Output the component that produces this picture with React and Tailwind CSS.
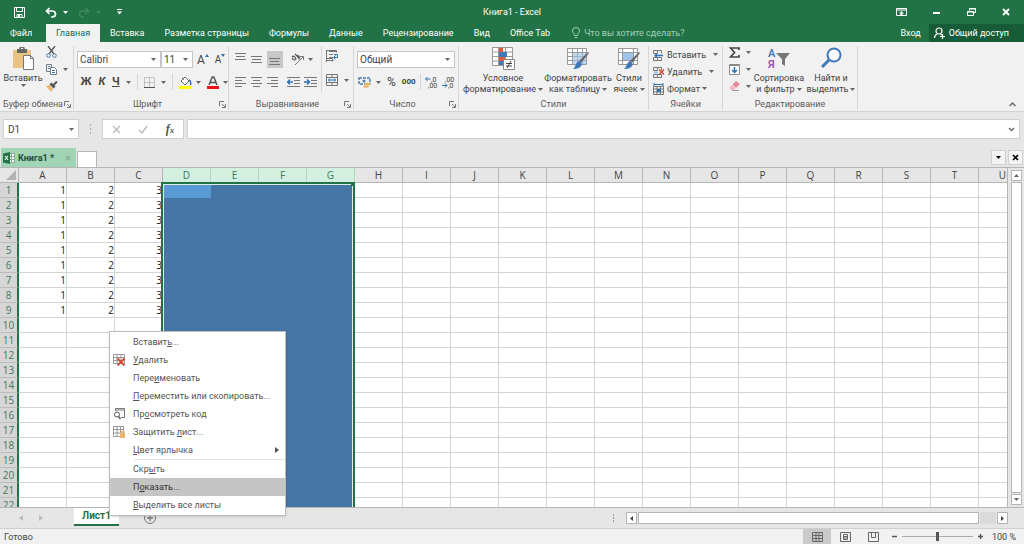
import React from "react";

const COLUMNS = "ABCDEFGHIJKLMNOPQRSTU".split("");
const ROWS = Array.from({ length: 22 }, (_, i) => i + 1);
const SELECTED = ["D", "E", "F", "G"];
const VALUES = { A: 1, B: 2, C: 3 };

const TABS = ["Вставка", "Разметка страницы", "Формулы", "Данные", "Рецензирование", "Вид", "Office Tab"];

function Svg({ w = 16, h = 16, children, className = "" }) {
  return (
    <svg width={w} height={h} viewBox={`0 0 ${w} ${h}`} fill="none" aria-hidden="true" className={`shrink-0 ${className}`}>
      {children}
    </svg>
  );
}

function Caret({ className = "text-[#666]" }) {
  return (
    <Svg w={5} h={3} className={className}>
      <path d="M0 0h5L2.500 3z" fill="currentColor" />
    </Svg>
  );
}

function IconButton({ label, children, className = "" }) {
  return (
    <button type="button" aria-label={label} title={label} className={`flex items-center justify-center ${className}`}>
      {children}
    </button>
  );
}

function Launcher() {
  return (
    <Svg w={7} h={7}>
      <path d="M.5 5V.5H5M3 3l3 3M6.500 3v3.500H3" stroke="#777" />
    </Svg>
  );
}

function Group({ title, launcher, className = "", children }) {
  return (
    <section aria-label={title} className="flex shrink-0 pt-1 pb-px">
      <div className={`flex flex-col border-r border-[#d6d6d6] ${className}`}>
        <div className="flex-1">{children}</div>
        <div className="flex h-3 items-center px-0.5 text-[#5c5c5c]">
          <span className="flex-1 text-center whitespace-nowrap">{title}</span>
          {launcher && (
            <IconButton label={`${title}: параметры`}>
              <Launcher />
            </IconButton>
          )}
        </div>
      </div>
    </section>
  );
}

function Combo({ label, options, className = "" }) {
  return (
    <div className={`relative h-[17px] border border-[#c6c6c6] bg-white ${className}`}>
      <select aria-label={label} className="block h-full w-full appearance-none bg-transparent pl-0.5 text-[10px] leading-none text-[#444] outline-none">
        {options.map((o) => (
          <option key={o}>{o}</option>
        ))}
      </select>
      <Caret className="pointer-events-none absolute top-1.5 right-1 text-[#666]" />
    </div>
  );
}

function Lines({ rows }) {
  return (
    <Svg w={12} h={12}>
      {rows.map(([x, y, len]) => (
        <path key={y} d={`M${x} ${y}.5h${len}`} stroke="#777" />
      ))}
    </Svg>
  );
}

function Indent({ right }) {
  return (
    <Svg w={13} h={12}>
      <path d="M0 1.500h13M7 4.500h6M7 7.500h6M0 10.500h13" stroke="#777" />
      <path d={right ? "M0 6h5M3 3.500L5.500 6 3 8.500" : "M1 6h5M3 3.500L.5 6 3 8.500"} stroke="#2e74b5" strokeWidth="1.500" />
    </Svg>
  );
}

function Decimal({ top, bottom, left }) {
  return (
    <svg width="13" height="13" viewBox="0 0 13 13" aria-hidden="true" className="shrink-0">
      <text x={left ? 6 : 3} y="6" fontSize="7" fill="#444">{top}</text>
      <text x={left ? 3 : 6} y="12" fontSize="7" fill="#444">{bottom}</text>
      {left ? (
        <path d="M.5 3h5M2.500 1L.5 3l2 2" stroke="#2e74b5" fill="none" />
      ) : (
        <path d="M0 9.500h5M3 7.500l2 2-2 2" stroke="#2e74b5" fill="none" />
      )}
    </svg>
  );
}

function BigButton({ icon, lines, className = "" }) {
  return (
    <button type="button" className={`flex flex-col items-center text-[#444] ${className}`}>
      {icon}
      <span className="mt-[3px] leading-[11px] whitespace-nowrap">{lines[0]}</span>
      <span className="flex items-center gap-0.5 leading-[11px] whitespace-nowrap">
        {lines[1]}
        <Caret />
      </span>
    </button>
  );
}

function SmallGrid({ children }) {
  return (
    <Svg w={12} h={12}>
      <path d="M.5 1.500h4v3h-4zM4.500 1.500h4v3M.5 8.500h4v3h-4zM4.500 8.500h4v3h-4" stroke="#777" />
      {children}
    </Svg>
  );
}

function TitleBar() {
  return (
    <header className="grid h-6 shrink-0 grid-cols-[1fr_auto_1fr] items-center bg-[#217346] text-white">
      <div className="flex items-center pl-3.5">
        <IconButton label="Сохранить">
          <Svg w={11} h={11}>
            <path d="M.5.5h10v10H.5zM2.500.5v4h6v-4M3 10.500V7.500h5v3" stroke="#fff" />
            <path d="M4 8h2v2H4z" fill="#fff" />
          </Svg>
        </IconButton>
        <IconButton label="Отменить" className="ml-5 gap-1.5">
          <Svg w={12} h={11}>
            <path d="M4.500 1L1.500 4l3 3M1.500 4h5.500c2 0 3.500 1 3.500 3s-1.500 3-3.500 3H6" stroke="#fff" strokeWidth="1.700" />
          </Svg>
          <Caret className="text-white" />
        </IconButton>
        <IconButton label="Повторить" className="ml-2.5 gap-1.5">
          <Svg w={12} h={11}>
            <path d="M7.500 1l3 3-3 3M10.500 4H5C3 4 1.500 5 1.500 7S3 10 5 10h1" stroke="#3f885f" strokeWidth="1.500" />
          </Svg>
          <Caret className="text-[#3f885f]" />
        </IconButton>
        <IconButton label="Настройка панели" className="ml-4">
          <Svg w={5} h={6}>
            <path d="M0 .5h5" stroke="#fff" />
            <path d="M0 2.500h5L2.500 5.500z" fill="#fff" />
          </Svg>
        </IconButton>
      </div>
      <h1 className="whitespace-nowrap">Книга1 - Excel</h1>
      <div className="flex items-center justify-end gap-[26px] pr-3.5">
        <IconButton label="Параметры ленты">
          <Svg w={11} h={8}>
            <path d="M.5.5h10v7H.5zM.5 2h10" stroke="#fff" />
            <path d="M5.500 3L8 5.500H6.500V7h-2V5.500H3z" fill="#fff" />
          </Svg>
        </IconButton>
        <IconButton label="Свернуть">
          <Svg w={8} h={8}>
            <path d="M0 5h7" stroke="#fff" strokeWidth="2" />
          </Svg>
        </IconButton>
        <IconButton label="Восстановить">
          <Svg w={9} h={8}>
            <path d="M2.500 2.500V.5h6v4h-2M.5 3.500h6v4h-6z" stroke="#fff" />
            <path d="M2 1h7M0 4h7" stroke="#fff" />
          </Svg>
        </IconButton>
        <IconButton label="Закрыть">
          <Svg w={8} h={8}>
            <path d="M1 1l6 6M7 1L1 7" stroke="#fff" strokeWidth="1.900" />
          </Svg>
        </IconButton>
      </div>
    </header>
  );
}

function RibbonTabs() {
  return (
    <nav aria-label="Лента" className="flex h-[18px] shrink-0 items-stretch bg-[#217346] text-white">
      <button type="button" className="w-[46px] pr-1">Файл</button>
      <button type="button" aria-current="page" className="w-[54px] bg-[#f1f1f1] text-[#217346]">Главная</button>
      {TABS.map((t) => (
        <button key={t} type="button" className="px-2.5 whitespace-nowrap">{t}</button>
      ))}
      <label className="ml-3 flex flex-1 items-center gap-1 text-[#a6cdb6]">
        <Svg w={8} h={12}>
          <path d="M2.500 8.500C2.500 6.500.5 6 .5 4a3.500 3.500 0 0 1 7 0c0 2-2 2.500-2 4.500zM2.500 10.500h3" stroke="#a6cdb6" />
        </Svg>
        <input type="text" aria-label="Помощник" placeholder="Что вы хотите сделать?" className="w-32 bg-transparent outline-none placeholder:text-[#a6cdb6] placeholder:opacity-100" />
      </label>
      <button type="button" className="px-2">Вход</button>
      <button type="button" className="flex items-center gap-1 bg-[#185c37] pr-[15px] pl-[5px] whitespace-nowrap">
        <Svg w={11} h={12}>
          <circle cx="5" cy="4" r="3" stroke="#fff" strokeWidth="1.200" />
          <path d="M.5 11c0-2 1-3.500 3-4.500M6.500 7l1 1M8.500 7v5M6 9.500h5" stroke="#fff" strokeWidth="1.200" />
        </Svg>
        Общий доступ
      </button>
    </nav>
  );
}

function Ribbon() {
  return (
    <div className="flex h-[70px] shrink-0 border-b border-[#d2d2d2] bg-[#f1f1f1] text-[#444]">
      <Group title="Буфер обмена" launcher className="w-[74px]">
        <div className="flex">
          <BigButton
            className="w-[46px] pt-px"
            lines={["Вставить", ""]}
            icon={
              <Svg w={23} h={23}>
                <path d="M1 3h18v18H1z" fill="#eac282" />
                <path d="M5 2h10v4H5z" fill="#666" />
                <path d="M8 2a2 2 0 0 1 4 0" stroke="#666" strokeWidth="1.500" />
                <path d="M11.500 8.500h7l3 3v11h-10z" fill="#fff" stroke="#777" />
                <path d="M18.500 8.500v3h3" stroke="#777" />
              </Svg>
            }
          />
          <div className="flex flex-col items-start gap-1.5">
            <IconButton label="Вырезать">
              <Svg w={11} h={12}>
                <path d="M2 0l6 8M9 0L3 8" stroke="#555" strokeWidth="1.300" />
                <circle cx="2.500" cy="9.500" r="1.800" stroke="#4a7fb5" />
                <circle cx="8.500" cy="9.500" r="1.800" stroke="#4a7fb5" />
              </Svg>
            </IconButton>
            <IconButton label="Копировать" className="gap-1.5">
              <Svg w={11} h={11}>
                <path d="M.5.5h5v7h-5zM2 2.500h2M2 4.500h2" stroke="#6d7f91" />
                <path d="M4.500 3.500h4l2 2v5h-6z" fill="#fff" stroke="#6d7f91" />
                <path d="M6 6.500h3M6 8.500h3" stroke="#2e74b5" />
              </Svg>
              <Caret />
            </IconButton>
            <IconButton label="Формат по образцу">
              <Svg w={12} h={11}>
                <path d="M0 5l3-1 4 4-2 3z" fill="#eab66b" />
                <path d="M3.500 3.500l4 4 2-2-4-4z" fill="#555" />
                <path d="M7.500 4L11 .5" stroke="#555" strokeWidth="2" />
              </Svg>
            </IconButton>
          </div>
        </div>
      </Group>

      <Group title="Шрифт" launcher className="w-[155px]">
        <div className="flex items-center pt-[5px] pl-[3px]">
          <Combo label="Шрифт" options={["Calibri"]} className="w-[84px]" />
          <Combo label="Размер шрифта" options={["11"]} className="w-[32px]" />
          <IconButton label="Увеличить размер" className="ml-1 text-xs leading-4">
            A<Svg w={4} h={3} className="mb-2"><path d="M0 3l2-3 2 3z" fill="#2e74b5" /></Svg>
          </IconButton>
          <IconButton label="Уменьшить размер" className="ml-1.5 text-[10px] leading-4">
            A<Svg w={4} h={3} className="mb-2"><path d="M0 0l2 3 2-3z" fill="#2e74b5" /></Svg>
          </IconButton>
        </div>
        <div className="flex h-6 items-center pl-1.5 pt-1 text-[11px] font-bold">
          <button type="button" aria-label="Полужирный" className="w-3">Ж</button>
          <button type="button" aria-label="Курсив" className="ml-1 w-3 italic">К</button>
          <button type="button" aria-label="Подчёркнутый" className="ml-1 flex items-center gap-1.5">
            <span className="underline">Ч</span>
            <Caret />
          </button>
          <span className="mx-1.5 h-4 w-px bg-[#d6d6d6]" />
          <IconButton label="Границы" className="gap-1.5">
            <Svg w={11} h={11}>
              <path d="M.5.5h10v10H.5zM5.500.5v10M.5 5.500h10" stroke="#999" strokeDasharray="1 1" />
              <path d="M0 10.500h11" stroke="#555" />
            </Svg>
            <Caret />
          </IconButton>
          <span className="mx-1.5 h-4 w-px bg-[#d6d6d6]" />
          <IconButton label="Цвет заливки" className="gap-1">
            <Svg w={13} h={13}>
              <path d="M2 5l4-4 4 4-4 4z" fill="#fff" stroke="#666" />
              <path d="M4 4V1.500" stroke="#666" />
              <path d="M10 4c2 1 2 3 1.500 5" stroke="#2e74b5" strokeWidth="1.500" />
              <path d="M0 10h12v3H0z" fill="#ffff00" />
            </Svg>
            <Caret />
          </IconButton>
          <IconButton label="Цвет текста" className="ml-1.5 gap-1">
            <Svg w={12} h={13}>
              <path d="M2 9L5.200 1h1.600L10 9M3.500 6.500h5" stroke="#555" strokeWidth="1.500" />
              <path d="M0 10h12v3H0z" fill="#f01010" />
            </Svg>
            <Caret />
          </IconButton>
        </div>
      </Group>

      <Group title="Выравнивание" launcher className="w-[125px]">
        <div className="flex">
          <div>
            <div className="flex h-[22px] items-center gap-1 pt-1 pl-1.5">
              <IconButton label="По верхнему краю"><Lines rows={[[0, 0, 11], [1, 3, 9], [0, 6, 11]]} /></IconButton>
              <IconButton label="По середине"><Lines rows={[[0, 3, 11], [1, 6, 9], [0, 9, 11]]} /></IconButton>
              <IconButton label="По нижнему краю" className="h-[17px] w-4 bg-[#c8c8c8]"><Lines rows={[[0, 5, 11], [1, 8, 9], [0, 11, 11]]} /></IconButton>
              <IconButton label="Ориентация" className="ml-1 gap-1">
                <Svg w={13} h={13}>
                  <path d="M1 4c2-2 3 0 4 2L3 7C1 7 1 5 2.500 5M4 1l5 5M5.500 3c2-1 4 1 2 3" stroke="#555" strokeWidth="1.100" />
                  <path d="M4 12l8-8M9 3.500h3.500V7" stroke="#777" />
                </Svg>
                <Caret />
              </IconButton>
            </div>
            <div className="flex h-6 items-center gap-1 pt-1 pl-1.5">
              <IconButton label="По левому краю"><Lines rows={[[0, 1, 11], [0, 4, 7], [0, 7, 11], [0, 10, 7]]} /></IconButton>
              <IconButton label="По центру"><Lines rows={[[0, 1, 11], [2, 4, 7], [0, 7, 11], [2, 10, 7]]} /></IconButton>
              <IconButton label="По правому краю"><Lines rows={[[0, 1, 11], [4, 4, 7], [0, 7, 11], [4, 10, 7]]} /></IconButton>
              <IconButton label="Уменьшить отступ" className="ml-1"><Indent /></IconButton>
              <IconButton label="Увеличить отступ"><Indent right /></IconButton>
            </div>
          </div>
          <div className="ml-1 flex flex-col items-start gap-3 border-l border-[#d6d6d6] pt-1 pl-1">
            <IconButton label="Перенести текст">
              <Svg w={13} h={12}>
                <path d="M.5 0v12M3 1.500h7M3 4.500h4M3 7.500h4M.5 10.500h7M.5.5h10v2M.5 8.500h6v3" stroke="#777" />
                <path d="M8 4.500h3.500v3H8M9.500 5.500L7.500 7.500l2 2" stroke="#2e74b5" />
              </Svg>
            </IconButton>
            <IconButton label="Объединить" className="gap-1.5">
              <Svg w={12} h={12}>
                <path d="M.5.5h11v11H.5zM.5 3.500h11M.5 8.500h11M6 .5v3M6 8.500v3" stroke="#777" />
                <path d="M2 6h8M4 4.500L2.500 6 4 7.500M8 4.500L9.500 6 8 7.500" stroke="#2e74b5" />
              </Svg>
              <Caret />
            </IconButton>
          </div>
        </div>
      </Group>

      <Group title="Число" launcher className="w-[105px]">
        <div className="pt-[5px] pl-[3px]">
          <Combo label="Числовой формат" options={["Общий"]} className="w-[98px]" />
        </div>
        <div className="flex h-6 items-center pt-1 pl-1">
          <IconButton label="Финансовый формат" className="gap-1">
            <Svg w={14} h={12}>
              <path d="M1 2h11v6H1z" stroke="#4a7fb5" strokeDasharray="3 1" strokeWidth="1.500" />
              <circle cx="6" cy="5" r="1.500" fill="#4a7fb5" />
              <ellipse cx="9.500" cy="8" rx="3" ry="1.500" fill="#eab66b" />
              <ellipse cx="8" cy="10.500" rx="3" ry="1.300" fill="#eab66b" />
            </Svg>
            <Caret />
          </IconButton>
          <button type="button" aria-label="Процентный формат" className="ml-1.5 text-xs">%</button>
          <button type="button" aria-label="Формат с разделителями" className="ml-1.5 text-[8px] font-bold">000</button>
          <span className="mx-1 h-4 w-px bg-[#d6d6d6]" />
          <IconButton label="Увеличить разрядность"><Decimal top=",0" bottom=",00" left /></IconButton>
          <IconButton label="Уменьшить разрядность" className="ml-1"><Decimal top=",00" bottom=",0" /></IconButton>
        </div>
      </Group>

      <Group title="Стили" className="w-[190px]">
        <div className="flex pt-px pl-[3px]">
          <BigButton
            className="w-[82px]"
            lines={["Условное", "форматирование"]}
            icon={
              <Svg w={23} h={23}>
                <path d="M.5.5h20v18H.5zM.5 5h20M.5 9.500h20M.5 14h20M6.500.5v18M13.500.5v18" stroke="#999" fill="#fff" />
                <path d="M7 1h4v4H7zM7 10h6v4H7z" fill="#e0583c" />
                <path d="M7 5h8v5H7zM7 14h4v4H7z" fill="#3f78b8" />
                <path d="M11.500 12.500h11v10h-11z" fill="#fff" stroke="#888" />
                <path d="M14 16.500h6M14 19h6M19 14l-4 7" stroke="#444" />
              </Svg>
            }
          />
          <BigButton
            className="w-[68px]"
            lines={["Форматировать", "как таблицу"]}
            icon={
              <Svg w={23} h={23}>
                <path d="M.5 1.500h19v16H.5zM.5 5.500h19M.5 9.500h19M.5 13.500h19M5.500 1.500v16M10.500 1.500v16M15.500 1.500v16" stroke="#999" fill="#fff" />
                <path d="M6 6h13v11H6z" fill="#9dc3e6" fillOpacity=".65" />
                <path d="M22 6l-8 10-2-2 9-9z" fill="#666" />
                <path d="M12 14l3 3c-1 4-5 5-9 5 3-2 2-6 6-8z" fill="#3f78b8" />
              </Svg>
            }
          />
          <BigButton
            className="w-[34px]"
            lines={["Стили", "ячеек"]}
            icon={
              <Svg w={23} h={23}>
                <path d="M.5 1.500h19v16H.5zM.5 5.500h19M.5 13.500h19M4.500 1.500v16M15.500 1.500v16" stroke="#999" fill="#fff" />
                <path d="M5 6h10v7H5z" fill="#9dc3e6" />
                <path d="M22 6l-8 10-2-2 9-9z" fill="#666" />
                <path d="M12 14l3 3c-1 4-5 5-9 5 3-2 2-6 6-8z" fill="#3f78b8" />
              </Svg>
            }
          />
        </div>
      </Group>

      <Group title="Ячейки" className="w-[74px]">
        <div className="flex flex-col items-start pl-1">
          <button type="button" className="flex h-[17px] w-full items-center gap-0.5">
            <SmallGrid>
              <path d="M2 6.500h8M4 4.500l-2 2 2 2" stroke="#2e74b5" strokeWidth="1.300" />
            </SmallGrid>
            Вставить
            <span className="flex-1" />
            <Caret className="mr-1 text-[#666]" />
          </button>
          <button type="button" className="flex h-[17px] w-full items-center gap-0.5">
            <SmallGrid>
              <path d="M1 5.500h4v2H1z" fill="#9dc3e6" />
              <path d="M6 3.500l5 5M11 3.500l-5 5" stroke="#d9482b" strokeWidth="1.400" />
            </SmallGrid>
            Удалить
            <span className="flex-1" />
            <Caret className="mr-2 text-[#666]" />
          </button>
          <button type="button" className="flex h-[17px] items-center gap-0.5">
            <Svg w={12} h={12}>
              <path d="M.5 3.500h10v8H.5zM.5 6h10M.5 9h10M4 3.500v8M7.500 3.500v8" stroke="#777" />
              <path d="M4 6h4v3H4z" fill="#2e74b5" />
              <path d="M1 1.500h9M1 0v3M10 0v3" stroke="#2e74b5" />
            </Svg>
            Формат
            <Caret />
          </button>
        </div>
      </Group>

      <Group title="Редактирование" className="w-[135px]">
        <div className="flex">
          <div className="flex flex-col items-start gap-1.5 pt-px pl-1.5">
            <IconButton label="Автосумма" className="gap-1.5">
              <Svg w={11} h={11}>
                <path d="M10 3V1H1.500l4 4.500-4 4.500H10V8" stroke="#444" strokeWidth="1.700" />
              </Svg>
              <Caret />
            </IconButton>
            <IconButton label="Заполнить" className="gap-1.5">
              <Svg w={11} h={11}>
                <path d="M.5.5h10v10H.5z" stroke="#888" fill="#fff" />
                <path d="M0 1.500h11" stroke="#888" />
                <path d="M5.500 3v5.500M3 6l2.500 2.500L8 6" stroke="#2e74b5" strokeWidth="1.500" />
              </Svg>
              <Caret />
            </IconButton>
            <IconButton label="Очистить" className="gap-1.5">
              <Svg w={11} h={10}>
                <path d="M3.500 3.500L7 0l4 3-4 4z" fill="#e8879a" />
                <path d="M3 4l3.500 3.500L4.500 9H2L0 7z" fill="#f3b9c4" />
                <path d="M3 9.500h7" stroke="#999" />
              </Svg>
              <Caret />
            </IconButton>
          </div>
          <BigButton
            className="ml-0.5 w-[52px] pt-px"
            lines={["Сортировка", "и фильтр"]}
            icon={
              <svg width="22" height="23" viewBox="0 0 22 23" aria-hidden="true" className="shrink-0">
                <text x="0" y="10" fontSize="11" fontWeight="600" fill="#3f78b8">А</text>
                <text x="0" y="21" fontSize="11" fontWeight="600" fill="#9a4fb5">Я</text>
                <path d="M8 6h14l-5 6v7l-3-2v-5z" fill="#777" />
              </svg>
            }
          />
          <BigButton
            className="w-[52px] pt-px"
            lines={["Найти и", "выделить"]}
            icon={
              <Svg w={22} h={23}>
                <circle cx="14" cy="8" r="6.500" stroke="#3f78b8" strokeWidth="2" fill="#fff" />
                <path d="M9 13l-7 7" stroke="#3f78b8" strokeWidth="3" />
              </Svg>
            }
          />
        </div>
      </Group>
      <div className="flex flex-1 items-end justify-end pr-2 pb-1">
        <IconButton label="Свернуть ленту">
          <Svg w={7} h={5}>
            <path d="M.5 4l3-3 3 3" stroke="#666" strokeWidth="1.400" />
          </Svg>
        </IconButton>
      </div>
    </div>
  );
}

function FormulaBar() {
  return (
    <div className="flex h-9 shrink-0 items-center bg-[#e6e6e6] pr-1 pb-0.5 pl-[3px]">
      <div className="relative h-5 w-[76px] border border-[#cfcfcf] bg-white">
        <input aria-label="Имя ячейки" defaultValue="D1" className="h-full w-full bg-transparent pl-1 text-[10px] text-[#444] outline-none" />
        <Caret className="pointer-events-none absolute top-2 right-1 text-[#666]" />
      </div>
      <Svg w={3} h={10} className="mx-2.5">
        <path d="M1.500 0v10" stroke="#aaa" strokeDasharray="2 2" />
      </Svg>
      <div className="flex h-5 w-[82px] items-center justify-around border border-[#cfcfcf] bg-white">
        <IconButton label="Отмена">
          <Svg w={9} h={9}><path d="M1 1l7 7M8 1L1 8" stroke="#bbb" strokeWidth="1.300" /></Svg>
        </IconButton>
        <IconButton label="Ввод">
          <Svg w={10} h={9}><path d="M1 5l3 3 5-7" stroke="#bbb" strokeWidth="1.400" /></Svg>
        </IconButton>
        <button type="button" aria-label="Вставить функцию" className="font-['Liberation_Serif',serif] text-xs font-bold text-[#555] italic">
          f<span className="text-[9px]">x</span>
        </button>
      </div>
      <div className="relative ml-[3px] h-5 flex-1 border border-[#cfcfcf] bg-white">
        <input aria-label="Строка формул" className="h-full w-full bg-transparent px-1 outline-none" />
        <Svg w={7} h={5} className="pointer-events-none absolute top-[7px] right-1">
          <path d="M1 1l2.500 2.500L6 1" stroke="#666" strokeWidth="1.400" />
        </Svg>
      </div>
    </div>
  );
}

function BookTabs() {
  return (
    <div className="flex h-5 shrink-0 items-end border-b border-[#b5b5b5] bg-[#e6e6e6] pl-px">
      <div className="flex h-[19px] w-[75px] items-center bg-[#9fd5b5] pl-0.5">
        <Svg w={12} h={12}>
          <path d="M6 1.500h5.500v9H6M6 4.500h5M6 7.500h5M8.500 2v8" stroke="#8aa896" fill="#fff" />
          <path d="M0 1.500L7 0v12L0 10.500z" fill="#217346" />
          <path d="M2 4l3 4M5 4L2 8" stroke="#fff" strokeWidth="1.100" />
        </Svg>
        <span className="ml-[3px] flex-1 font-bold whitespace-nowrap text-[#234a35]">Книга1 *</span>
        <IconButton label="Закрыть книгу" className="mr-[5px]">
          <Svg w={6} h={6}><path d="M1 1l4 4M5 1L1 5" stroke="#85b398" strokeWidth="1.500" /></Svg>
        </IconButton>
      </div>
      <IconButton label="Новая книга" className="ml-px h-4 w-5 border border-b-0 border-[#b5b5b5] bg-white" />
      <span className="flex-1" />
      <IconButton label="Список книг" className="mr-0.5 mb-0.5 h-[15px] w-[15px] border border-[#d0d0d0] bg-[#f4f4f4]">
        <Caret className="text-black" />
      </IconButton>
      <IconButton label="Закрыть вкладку" className="mr-px mb-0.5 h-[15px] w-[15px] border border-[#d0d0d0] bg-[#f4f4f4]">
        <Svg w={7} h={7}><path d="M1 1l5 5M6 1L1 6" stroke="#000" strokeWidth="1.700" /></Svg>
      </IconButton>
    </div>
  );
}

function cellClass(col, row) {
  if (SELECTED.includes(col)) return col === "D" && row === 1 ? "bg-[#5b9bd5]" : "bg-[#4676a6]";
  return "border-r border-b border-[#d4d4d4] bg-white";
}

function Sheet() {
  return (
    <main className="flex min-h-0 flex-1 bg-[#e6e6e6]">
      <div className="relative min-w-0 flex-1 overflow-hidden border-r border-[#b5b5b5]">
        <table className="w-[1027px] table-fixed border-separate border-spacing-0 font-['Open_Sans','Noto_Sans',sans-serif] text-[10px] leading-[14px]">
          <colgroup>
            <col className="w-[19px]" />
            {COLUMNS.map((c) => (
              <col key={c} className="w-12" />
            ))}
          </colgroup>
          <thead>
            <tr className="h-[15px]">
              <th aria-label="Выделить все" className="border-r border-b border-[#b5b5b5] p-0">
                <Svg w={10} h={10} className="ml-auto mr-0.5">
                  <path d="M10 0v10H0z" fill="#b4b4b4" />
                </Svg>
              </th>
              {COLUMNS.map((c) => (
                <th
                  key={c}
                  scope="col"
                  className={`border-r border-b p-0 font-normal ${
                    SELECTED.includes(c) ? "border-r-[#b3d6c3] border-b-[#217346] bg-[#d2efe0] text-[#3f7a5a]" : "border-[#b5b5b5] text-[#444]"
                  }`}
                >
                  {c}
                </th>
              ))}
            </tr>
          </thead>
          <tbody>
            {ROWS.map((r) => (
              <tr key={r} className="h-[15px]">
                <th scope="row" className="border-r-2 border-b border-r-[#217346] border-b-[#bdbdbd] bg-[#d6d6d6] p-0 text-center font-normal text-[#3f7a5a]">
                  {r}
                </th>
                {COLUMNS.map((c) => (
                  <td key={c} className={`p-0 text-right text-[#222] ${cellClass(c, r)}`}>
                    {r <= 9 ? VALUES[c] : ""}
                  </td>
                ))}
              </tr>
            ))}
          </tbody>
        </table>
        <div className="pointer-events-none absolute top-3.5 left-[161px] h-screen w-[194px] border-2 border-[#217346]">
          <div className="h-full border border-[#dcebe3]" />
          <span className="absolute -top-0.5 -right-0.5 h-1 w-1 bg-[#217346]" />
        </div>
      </div>
      <div className="flex w-[16px] flex-col items-center gap-px py-0.5">
        <IconButton label="Вверх" className="h-[11px] w-[11px] border border-[#b5b5b5] bg-white">
          <Svg w={5} h={3}><path d="M0 3h5L2.500 0z" fill="#666" /></Svg>
        </IconButton>
        <div className="w-[11px] flex-1 border border-[#b5b5b5] bg-white" />
        <IconButton label="Вниз" className="h-[11px] w-[11px] border border-[#b5b5b5] bg-white">
          <Caret />
        </IconButton>
      </div>
    </main>
  );
}

function SheetTabs() {
  return (
    <div className="flex h-[21px] shrink-0 border-t border-[#b5b5b5] bg-[#e6e6e6]">
      <div className="flex w-[74px] items-center gap-4 pl-[19px]">
        <IconButton label="Предыдущий лист">
          <Svg w={4} h={6}><path d="M4 0v6L0 3z" fill="#bbb" /></Svg>
        </IconButton>
        <IconButton label="Следующий лист">
          <Svg w={4} h={6}><path d="M0 0v6l4-3z" fill="#bbb" /></Svg>
        </IconButton>
      </div>
      <button type="button" className="mb-0.5 w-[45px] border-b-2 border-[#217346] bg-white text-[10px] leading-4 font-bold text-[#217346]">Лист1</button>
      <IconButton label="Новый лист" className="ml-[25px]">
        <Svg w={12} h={12}>
          <circle cx="6" cy="6" r="5.500" stroke="#777" />
          <path d="M3 6h6M6 3v6" stroke="#777" strokeWidth="1.300" />
        </Svg>
      </IconButton>
      <span className="flex-1" />
      <div className="flex w-[412px] items-center gap-px">
        <Svg w={3} h={8} className="mr-2.5">
          <path d="M1.500 0v8" stroke="#999" strokeDasharray="2 1" />
        </Svg>
        <IconButton label="Влево" className="h-3 w-[11px] border border-[#b5b5b5] bg-white">
          <Svg w={3} h={5}><path d="M3 0v5L0 2.500z" fill="#444" /></Svg>
        </IconButton>
        <div className="h-3 flex-1 border border-[#b5b5b5] bg-white" />
        <span className="h-3 w-4 bg-[#dadada]" />
        <IconButton label="Вправо" className="mr-4 h-3 w-[11px] border border-[#b5b5b5] bg-white">
          <Svg w={3} h={5}><path d="M0 0v5l3-2.500z" fill="#444" /></Svg>
        </IconButton>
      </div>
    </div>
  );
}

function StatusBar() {
  return (
    <footer className="flex h-4 shrink-0 items-center border-t border-[#cfcfcf] bg-[#f1f1f1] text-[#444]">
      <span className="flex-1 pl-1">Готово</span>
      <IconButton label="Обычный" className="h-full w-7 bg-[#cacaca]">
        <Svg w={11} h={10}><path d="M.5.5h10v9H.5zM.5 3.500h10M.5 6.500h10M4 .5v9M7 .5v9" stroke="#666" /></Svg>
      </IconButton>
      <IconButton label="Разметка страницы" className="w-7">
        <Svg w={11} h={10}><path d="M.5.5h10v9H.5zM3.500 2.500h4v5h-4zM4 4.500h3M4 6h3" stroke="#666" /></Svg>
      </IconButton>
      <IconButton label="Страничный" className="w-7">
        <Svg w={11} h={10}><path d="M.5.5h10v9H.5zM3.500.5v5h4v-5" stroke="#666" /></Svg>
      </IconButton>
      <IconButton label="Уменьшить масштаб" className="ml-1">
        <Svg w={7} h={7}><path d="M1 3.500h5" stroke="#555" strokeWidth="1.500" /></Svg>
      </IconButton>
      <input
        type="range"
        aria-label="Масштаб"
        min="0"
        max="200"
        defaultValue="100"
        className="mx-1 h-3 w-[71px] appearance-none bg-transparent [&::-webkit-slider-runnable-track]:h-px [&::-webkit-slider-runnable-track]:bg-[#aaa] [&::-webkit-slider-thumb]:-mt-1 [&::-webkit-slider-thumb]:h-[9px] [&::-webkit-slider-thumb]:w-[3px] [&::-webkit-slider-thumb]:appearance-none [&::-webkit-slider-thumb]:bg-[#555]"
      />
      <IconButton label="Увеличить масштаб">
        <Svg w={7} h={7}><path d="M1 3.500h5M3.500 1v5" stroke="#555" strokeWidth="1.500" /></Svg>
      </IconButton>
      <span className="w-10 pr-2 text-right whitespace-nowrap">100 %</span>
    </footer>
  );
}

const MENU = [
  { text: ["Вставит", "ь", "..."] },
  {
    text: ["", "У", "далить"],
    icon: (
      <Svg w={13} h={12}>
        <path d="M.5.5h11v9H.5zM.5 3.500h11M.5 6.500h11M4 .5v9M8 .5v9" stroke="#999" />
        <path d="M4.500 4.500l7 7M11.500 4.500l-7 7" stroke="#d9482b" strokeWidth="1.800" />
      </Svg>
    ),
  },
  { text: ["Пере", "и", "меновать"] },
  { text: ["", "П", "ереместить или скопировать..."] },
  {
    text: ["Пр", "о", "смотреть код"],
    icon: (
      <Svg w={13} h={12}>
        <path d="M2.500 3V.5h9v9H8M2.500 2h9" stroke="#777" />
        <circle cx="4" cy="6.500" r="2.500" stroke="#555" fill="#fff" />
        <path d="M5.500 8.500L7.500 11" stroke="#555" strokeWidth="1.300" />
      </Svg>
    ),
  },
  {
    text: ["Защитить ", "л", "ист..."],
    icon: (
      <Svg w={13} h={12}>
        <path d="M.5.5h10v10H.5zM.5 3.500h10M.5 7h10M4 .5v10M7.500.5v10" stroke="#999" />
        <path d="M7 7h5v5H7z" fill="#eab66b" />
        <path d="M8 7V5.500h3V7" stroke="#eab66b" />
      </Svg>
    ),
  },
  { text: ["", "Ц", "вет ярлычка"], submenu: true },
  { text: ["Скр", "ы", "ть"], separated: true },
  { text: ["П", "о", "казать..."], active: true },
  { text: ["", "В", "ыделить все листы"] },
];

function ContextMenu() {
  return (
    <div role="menu" className="absolute top-[331px] left-[109px] w-[177px] border border-[#bdbdbd] bg-white py-px text-[#555] shadow-sm">
      {MENU.map(({ text, icon, submenu, separated, active }) => (
        <React.Fragment key={text.join("")}>
          {separated && <div role="separator" className="ml-6 h-px bg-[#e2e2e2]" />}
          <button type="button" role="menuitem" className={`flex h-[18px] w-full items-center pr-1.5 text-left whitespace-nowrap ${active ? "bg-[#c5c5c5] text-[#333]" : ""}`}>
            <span className="flex w-[23px] shrink-0 pl-[3px]">{icon}</span>
            <span className="flex-1">
              {text[0]}
              <u>{text[1]}</u>
              {text[2]}
            </span>
            {submenu && (
              <Svg w={4} h={6}><path d="M0 0v6l4-3z" fill="#555" /></Svg>
            )}
          </button>
        </React.Fragment>
      ))}
    </div>
  );
}

export default function App() {
  return (
    <div className="relative flex h-screen flex-col overflow-hidden bg-[#e6e6e6] font-[Roboto,'Noto_Sans',sans-serif] text-[9px] leading-3">
      <TitleBar />
      <RibbonTabs />
      <Ribbon />
      <FormulaBar />
      <BookTabs />
      <Sheet />
      <SheetTabs />
      <StatusBar />
      <ContextMenu />
    </div>
  );
}
